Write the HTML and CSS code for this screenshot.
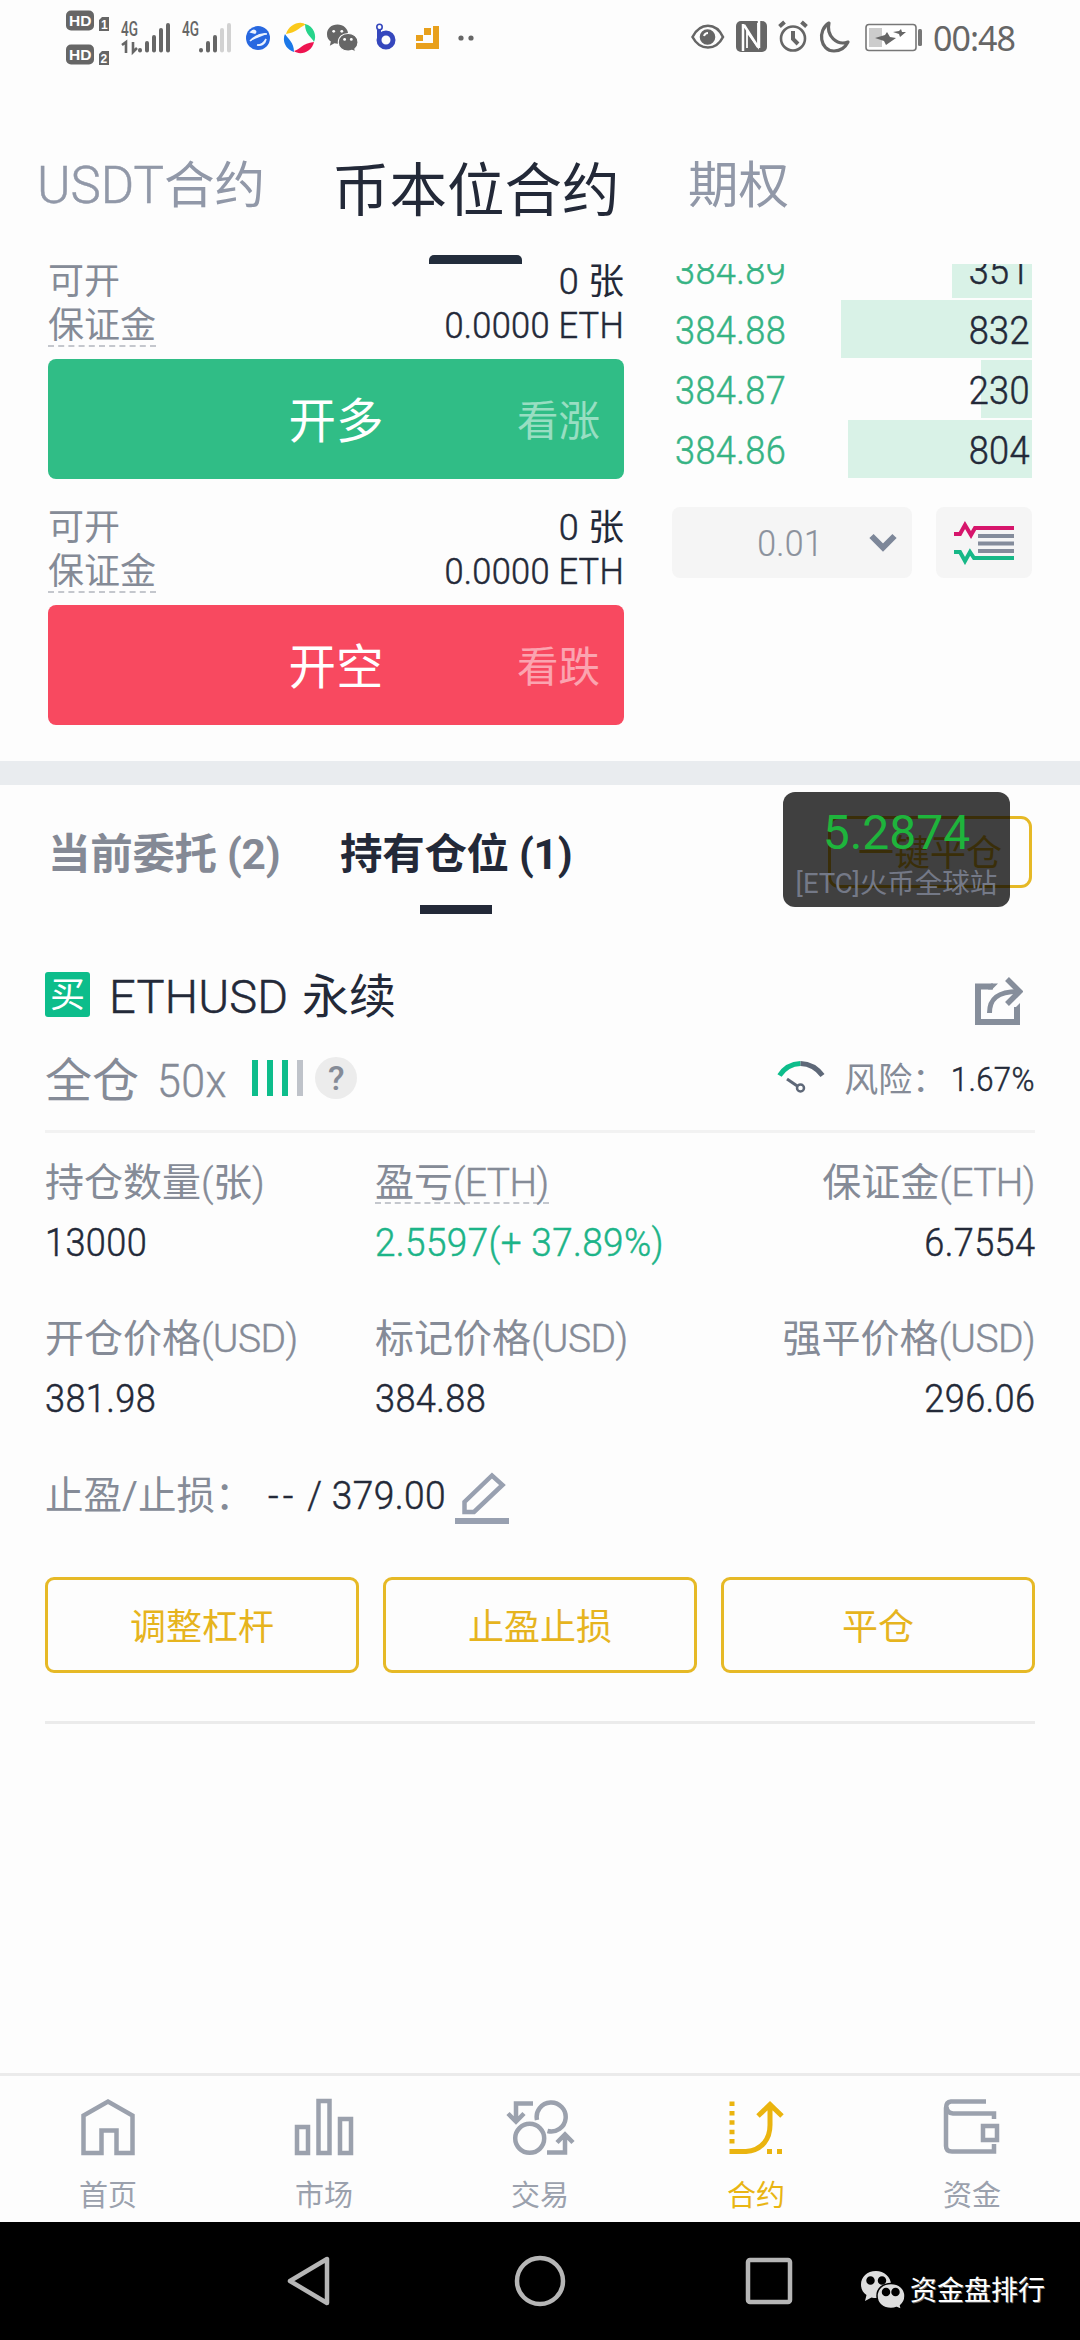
FILE: index.html
```html
<!DOCTYPE html>
<html lang="zh-CN">
<head>
<meta charset="utf-8">
<title>币本位合约</title>
<link rel="stylesheet" href="styles.css">
</head>
<body>
<header class="status">
  <svg class="st-net" width="186" height="60" viewBox="0 0 186 60">
    <g fill="#666"><rect y="4.500" width="28" height="20" rx="5"/><rect y="38.500" width="28" height="20" rx="5"/><path d="M33 14l3-3h7v14H33zM33 48l3-3h7v14H33z"/></g>
    <g class="st-hd"><text x="3" y="20">HD</text><text x="3" y="54">HD</text></g>
    <g class="st-sim"><text x="35" y="22.500">1</text><text x="34.500" y="56.500">2</text></g>
    <g class="st-4g"><text x="55" y="30" textLength="17" lengthAdjust="spacingAndGlyphs">4G</text><text x="116" y="30" textLength="17" lengthAdjust="spacingAndGlyphs">4G</text></g>
    <path d="M56 39l4-3v11M67 36v10l4-4" fill="none" stroke="#666" stroke-width="2.600"/>
    <g stroke="#666" stroke-width="4" stroke-linecap="round"><path d="M74 44v.5M81 37v7.500M88 31v13.500M95 24v20.500M102 19v25.500M135 44v.5M142 37v7.500M149 31v13.500"/><path stroke="#d2d2d2" d="M156 24v20.500M163 19v25.500"/></g>
  </svg>
  <svg class="st-globe" width="26" height="26" viewBox="0 0 26 26"><circle cx="13" cy="13" r="12" fill="#2868e0"/><path d="M6 7C9 4 12 6 10 8zM22 9C14 8 9 12 5 16M12 20c3 0 7-2 9-6-1 5-5 7-9 6" fill="#eaf2ff" stroke="#eaf2ff" stroke-width="1.600"/></svg>
  <svg class="st-ring" width="34" height="34" viewBox="0 0 34 34"><path fill="#fbc91b" d="M3 13C6 3 18-1 23 4c-5 0-7 7-20 9z"/><path fill="#27d48b" d="M22 3c9 2 12 12 9 18-2-5-9-7-9-18z"/><path fill="#ee1450" d="M31 21c-2 10-14 14-20 9 6-1 8-8 20-9z"/><path fill="#1b78e8" d="M11 31C2 28-1 19 2 13c3 5 9 8 9 18z"/></svg>
  <svg class="st-wechat" width="31" height="28" viewBox="0 0 44 38"><use href="#wechat" fill="#666" stroke="#fff"/><g fill="#fff"><circle cx="9.500" cy="9.500" r="2"/><circle cx="21" cy="9.500" r="2"/><circle cx="25" cy="21" r="2"/><circle cx="34.500" cy="21" r="2"/></g></svg>
  <svg class="st-b" width="22" height="28" viewBox="0 0 22 28"><circle cx="12" cy="17" r="7" fill="none" stroke="#3547bd" stroke-width="5"/><path d="M5 18V7" stroke="#3547bd" stroke-width="4"/><circle cx="5.500" cy="4" r="2.700" fill="none" stroke="#3547bd" stroke-width="1.600"/></svg>
  <svg class="st-sq" width="23" height="23" viewBox="0 0 23 23"><path fill="#e8a01c" d="M8 2h7v7H8zM0 9h7v6H0zM17 0h6v23H0v-6h17z"/></svg>
  <svg class="st-dots" width="16" height="6" viewBox="0 0 16 6"><circle cx="3" cy="3" r="2.600" fill="#666"/><circle cx="13" cy="3" r="2.600" fill="#666"/></svg>
  <svg class="st-sys" width="232" height="34" viewBox="0 0 232 34">
    <g fill="none" stroke="#666" stroke-width="2.600">
      <path d="M1.500 17C9 2 25 2 32 17 25 31 9 31 1.500 17z"/><circle cx="16.500" cy="17" r="6.500" fill="#666"/><path d="M13 16q1-3 4-3" stroke="#fff" stroke-width="2"/>
      <circle cx="102" cy="18.500" r="12"/><path stroke-width="4" d="M102 11v8l5 5M88.500 6.500l5-4.500M110.500 2l5 4.500"/>
      <path stroke-width="3.200" d="M138 3c-12 7-9 28 5 28 6 0 11-3 14-9-11 4-22-6-19-19z" stroke-linejoin="round"/>
    </g>
    <rect x="45" y="1" width="31" height="31" rx="5" fill="#666"/><path d="M52 31V4M53 5l14 22M68 1v27" stroke="#fff" stroke-width="2.500" fill="none"/><path d="M56 28V12l11 15V3" stroke="#fff" stroke-width="1.800" fill="none"/>
    <rect x="175" y="4.500" width="50" height="26" rx="3" fill="#fff" stroke="#777" stroke-width="1.600"/><rect x="178" y="8" width="13" height="19" fill="#ccc"/>
    <path d="M184 18l10-3 2-3 3 5 6 1-10 7-2-4zM202 12l6-1 2-2 1 3 4 0-6 5-1-3z" fill="#666"/><rect x="227" y="9" width="4" height="17" rx="1.500" fill="#777"/>
  </svg>
  <span class="st-time">00:48</span>
</header>

<nav class="tabs">
  <span class="tab t1"><span class="usdt">USDT</span>合约</span>
  <span class="tab active">币本位合约</span>
  <span class="tab t3">期权</span>
</nav>

<main>
<section class="trade">
  <div class="form">
    <div class="side">
      <div class="line l1"><span class="k">可开</span><span class="v"><span class="din w">0</span> 张</span></div>
      <div class="line l2"><span class="k dash">保证金</span><span class="v"><span class="din r eth">0.0000 ETH</span></span></div>
      <button class="btn long"><span></span><span>开多</span><small>看涨</small></button>
    </div>
    <div class="side">
      <div class="line l1"><span class="k">可开</span><span class="v"><span class="din w">0</span> 张</span></div>
      <div class="line l2"><span class="k dash">保证金</span><span class="v"><span class="din r eth">0.0000 ETH</span></span></div>
      <button class="btn short"><span></span><span>开空</span><small>看跌</small></button>
    </div>
  </div>
  <div class="book">
    <div class="lv"><span class="din p">384.89</span><span class="bar" style="width:80px"><span class="din r">351</span></span></div>
    <div class="lv"><span class="din p">384.88</span><span class="bar" style="width:191px"><span class="din r">832</span></span></div>
    <div class="lv"><span class="din p">384.87</span><span class="bar" style="width:51px"><span class="din r">230</span></span></div>
    <div class="lv"><span class="din p">384.86</span><span class="bar" style="width:184px"><span class="din r">804</span></span></div>
    <div class="ctl">
      <div class="select"><span class="din r">0.01</span><svg width="28" height="19" viewBox="0 0 28 19"><path d="M2.500 3L14 14.500 25.500 3" fill="none" stroke="#7d8799" stroke-width="6"/></svg></div>
      <div class="depth"><svg width="60" height="44" viewBox="0 0 60 44" fill="none" stroke-width="4"><path stroke="#d6156b" d="M0 13h6l5-9 6 10 4-7h39"/><path stroke="#848c9b" d="M24 15h36M24 22.500h36M24 30h36"/><path stroke="#17b887" d="M0 31h6l5 9 5-9 4 6h40"/></svg></div>
    </div>
  </div>
</section>

<section class="positions">
  <div class="ptabs">
    <span class="pt">当前委托 (2)</span>
    <span class="pt on">持有仓位 (1)</span>
    <span class="closeall">一键平仓</span>
    <aside class="float"><b>5.2874</b><i>[ETC]火币全球站</i></aside>
  </div>

  <div class="card">
    <div class="head">
      <span class="buy">买</span><span class="name"><span class="lt">ETHUSD</span> 永续</span>
      <svg class="share" width="48" height="48" viewBox="0 0 48 48" fill="none" stroke="#868e9b"><path stroke-width="6" d="M18 9.500H3V45h39V30"/><path fill="#868e9b" stroke="none" d="M16 6.500h7l-6 6h-4zM45 26v6h-6z"/><path stroke-width="5" d="M14.500 36C14.500 22 22 14.500 43 14.500"/><path stroke-width="5.500" d="M32 2l12.500 12.500L32 27"/></svg>
    </div>
    <div class="sub">
      <span class="mode">全仓</span><span class="din lev">50x</span>
      <span class="lvl"><i></i><i></i><i></i><i class="off"></i></span><span class="q">?</span>
      <svg class="gauge" width="48" height="34" viewBox="0 0 48 34" fill="none"><path stroke="#0dbd8b" stroke-width="5" d="M2.500 15.500Q10 4 23.500 3.500"/><path stroke="#5e6878" stroke-width="5" d="M23.500 3.500Q37 4 45.500 15.500"/><path stroke="#5e6878" stroke-width="3" d="M10 19l11 7.500"/><circle cx="23.500" cy="28" r="3.500" stroke="#5e6878" stroke-width="2.500"/></svg>
      <span class="risk">风险：</span><span class="pct"><span class="din r">1.67%</span></span>
    </div>
    <div class="grid">
      <div><label>持仓数量<s>(</s>张<s>)</s></label><p><span class="din">13000</span></p></div>
      <div><label class="dash">盈亏<s>(ETH)</s></label><p class="up"><span class="din">2.5597(+ 37.89%)</span></p></div>
      <div class="end"><label>保证金<s>(ETH)</s></label><p><span class="din r">6.7554</span></p></div>
      <div><label>开仓价格<s>(USD)</s></label><p><span class="din">381.98</span></p></div>
      <div><label>标记价格<s>(USD)</s></label><p><span class="din">384.88</span></p></div>
      <div class="end"><label>强平价格<s>(USD)</s></label><p><span class="din r">296.06</span></p></div>
    </div>
    <div class="tpsl">
      <span class="tl">止盈/止损：</span><span class="tv"><span class="din"><span class="none">--</span> / 379.00</span></span>
      <svg width="54" height="54" viewBox="0 0 54 54"><path d="M9.500 41V31L37 4.500 47.500 14 19 41z" fill="none" stroke="#98a0b0" stroke-width="4.500"/><path d="M0 50h54" stroke="#98a0b0" stroke-width="6"/></svg>
    </div>
    <div class="acts"><button>调整杠杆</button><button>止盈止损</button><button>平仓</button></div>
  </div>
</section>
</main>

<nav class="bottom">
  <a><svg viewBox="0 0 60 60"><path d="M5.500 56V18.500L30 4.500 54.500 18.500V56H38.500V33.500H23.500V56z"/></svg>首页</a>
  <a><svg viewBox="0 0 60 60"><path d="M3 30h11v26H3zM24.500 4h11v52h-11zM46 22h11v34H46z"/></svg>市场</a>
  <a><svg class="swap" viewBox="0 0 66 60"><path d="M26 6.500H9V24M1 16.500L9 24.500 17 16.500M30 23A14.500 14.500 0 1 1 40.500 34M40 55.500H58V38M50 45.500L58 37.500 66 45.500"/><circle cx="22.700" cy="41.300" r="14.500"/></svg>交易</a>
  <a class="cur"><svg viewBox="0 0 60 60"><path stroke-width="5" d="M6 4.500v43" stroke-dasharray="4.500 4.900"/><path stroke-width="5" d="M3.500 54.500H20C37 53 44 41 44 28V8M32 19L44 7.500 56 19M41 54.500h5M51 54.500h5"/></svg>合约</a>
  <a><svg viewBox="0 0 60 60"><path d="M44 4.500H9Q4 5 4 11V49Q4 54.500 10 54.500H52V47M4.500 10Q5 16 11 16.500H52V22M41 29h14v14H41z"/></svg>资金</a>
</nav>

<footer class="sysnav">
  <svg class="back" width="44" height="52" viewBox="0 0 44 52"><path d="M40 4v44L3 26z"/></svg>
  <svg class="home" width="52" height="52" viewBox="0 0 52 52"><circle cx="26" cy="26" r="23"/></svg>
  <svg class="recent" width="48" height="48" viewBox="0 0 48 48"><rect x="3" y="3" width="42" height="42" rx="2"/></svg>
  <svg class="wx" width="44" height="38" viewBox="0 0 44 38"><g id="wechat"><path stroke="none" d="M15 0C6 0 0 6 0 13.500c0 5 2 8 5.500 10.500L4 30l6.500-3.500C22 29 30 22 30 13.500 30 6 23 0 15 0z"/><path stroke-width="1.500" d="M30 12.500c-8 0-14 5-14 12.500s6 12.500 14 12.500c2 0 4-.3 5.500-1l5 2-1-4c3-2.500 4.500-5.500 4.500-9.500 0-7.500-6-12.500-14-12.500z"/></g><g fill="#000"><circle cx="9.500" cy="9.500" r="2"/><circle cx="21" cy="9.500" r="2"/><circle cx="25" cy="21" r="2"/><circle cx="34.500" cy="21" r="2"/></g></svg>
  <span>资金盘排行</span>
</footer>
</body>
</html>
```
FILE: styles.css
```css
* { box-sizing: border-box; }
body { margin: 0; width: 1080px; height: 2340px; display: flex; flex-direction: column; background: #fdfdfd; color: #232938; font-family: Roboto, "Noto Sans CJK SC", sans-serif; font-size: 36px; overflow: hidden; }
svg { display: block; flex: none; }
button { font: inherit; margin: 0; padding: 0; border: 0; }
s, i, b { text-decoration: none; font-style: normal; font-weight: 400; }

.din { display: inline-block; transform: scaleX(.915); transform-origin: left center; white-space: nowrap; font-weight: 300; letter-spacing: .4px; }
.din, .lt, .usdt, .grid s { -webkit-text-stroke: .5px currentColor; }
.din.r { transform-origin: right center; }
.din.w { transform: none; }
.din.eth { transform: scaleX(.955); letter-spacing: .3px; }

.status { height: 80px; flex: none; display: flex; align-items: flex-start; padding-left: 66px; color: #666; }
.st-net { margin-top: 6px; }
.st-hd text { font: bold 15.500px "Liberation Sans", sans-serif; fill: #fff; }
.st-sim text { font: bold 12px "Liberation Sans", sans-serif; fill: #fff; }
.st-4g text { font: 500 20px Roboto, sans-serif; fill: #666; }
.st-globe { margin: 25px 0 0 -7px; }
.st-ring { margin: 21px 0 0 12px; }
.st-wechat { margin: 24px 0 0 10px; }
.st-b { margin: 23px 0 0 16px; }
.st-sq { margin: 26px 0 0 20px; }
.st-dots { margin: 35px 0 0 19px; }
.st-sys { margin: 20px 0 0 217px; }
.st-time { margin: 15px 0 0 10px; font: 34px/46px "Noto Sans", sans-serif; letter-spacing: -1px; }

.tabs { height: 184px; flex: none; display: flex; padding-left: 37px; color: #9198a8; font-size: 50.500px; line-height: 184px; white-space: nowrap; }
.tab { margin-top: 14px; }
.usdt { font-weight: 300; letter-spacing: 0; font-size: 51px; }
.t1 { width: 295px; }
.t3 { margin-left: 2px; }
.active { position: relative; z-index: 1; color: #232938; font-size: 57.500px; width: 354px; margin-top: 20px; }
.active::after { content: ""; position: absolute; left: 97px; top: 155px; width: 93px; height: 9px; border-radius: 5px 5px 0 0; background: #232d3c; }

.trade { height: 521px; display: flex; justify-content: space-between; padding: 0 48px; overflow: hidden; border-bottom: 24px solid #e9ecef; }
.form { width: 576px; display: flex; flex-direction: column; gap: 31px; }
.line { display: flex; justify-content: space-between; white-space: nowrap; }
.l1 { height: 34px; line-height: 36px; }
.l2 { height: 44px; margin-top: 5px; line-height: 47px; }
.k { color: #858b97; }
.dash { border-bottom: 2px dashed #c4c7cd; }
.btn { width: 576px; height: 120px; margin-top: 12px; border-radius: 8px; color: #fff; font-size: 47.500px; line-height: 60px; display: grid; grid-template-columns: 1fr auto 1fr; align-items: center; padding: 5px 24px 0; }
.btn small { font-size: 41.500px; justify-self: end; opacity: .5; }
.long { background: #30bd86; }
.short { background: #f84960; }
.book { width: 360px; margin-top: -24px; }
.lv { height: 58px; margin-bottom: 2px; display: flex; justify-content: space-between; line-height: 62px; font-size: 39.500px; }
.p { color: #36b384; margin-left: 3px; }
.bar { background: #d9f2e7; display: flex; justify-content: flex-end; padding-right: 2px; }
.ctl { display: flex; justify-content: space-between; margin-top: 29px; }
.select { width: 240px; height: 71px; border-radius: 8px; background: #f5f5f5; display: flex; align-items: center; justify-content: flex-end; gap: 46px; padding-right: 15px; color: #8b919c; }
.select .din { transform: scaleX(.94); padding-top: 2px; -webkit-text-stroke: .2px; }
.depth { width: 96px; height: 71px; border-radius: 8px; background: #f5f5f5; display: grid; place-items: center; }

.ptabs { height: 129px; display: flex; padding-left: 48px; position: relative; font-size: 42.500px; font-weight: 700; line-height: 140px; color: #848995; white-space: nowrap; }
.pt { position: relative; width: 292px; letter-spacing: -.3px; }
.on { color: #232938; width: 488px; }
.on::after { content: ""; position: absolute; left: 80px; top: 120px; width: 72px; height: 9px; background: #232938; }
.closeall { width: 204px; height: 72px; margin-top: 31px; border: 3px solid #e6b926; border-radius: 11px; font-size: 36px; font-weight: 400; line-height: 70px; text-align: center; color: #e6b926; }
.float { position: absolute; left: 783px; top: 7px; width: 227px; height: 115px; border-radius: 12px; background: rgba(0,0,0,.75); display: flex; flex-direction: column; align-items: center; }
.float b { font-size: 48px; line-height: 48px; margin-top: 17px; color: #1eb43c; }
.float i { font-size: 27.500px; line-height: 32px; margin-top: 11px; color: #747987; }

.card { padding: 0 45px; }
.head { height: 120px; padding-top: 36px; display: flex; line-height: 94px; }
.buy { width: 45px; height: 45px; margin-top: 22px; border-radius: 3px; background: #0dbd8b; color: #fff; font-size: 35px; line-height: 47px; text-align: center; }
.name { margin-left: 19px; font-size: 47px; flex: 1; }
.lt { font-weight: 300; letter-spacing: .2px; margin-right: 2px; }
.share { margin: 27px 12px 0 0; }
.sub { height: 99px; border-bottom: 3px solid #f2f2f2; display: flex; line-height: 93px; color: #858b97; white-space: nowrap; }
.mode { font-size: 47px; width: 112px; }
.lev { font-size: 47px; width: 96px; -webkit-text-stroke: .4px; }
.lvl { display: flex; gap: 9px; height: 36px; margin-top: 26px; }
.lvl i { width: 6px; background: #0dbd8b; }
.lvl .off { background: #bfc3ca; }
.q { width: 42px; height: 42px; border-radius: 50%; margin: 23px 0 0 12px; background: #ececec; font-size: 34px; font-weight: 500; line-height: 43px; text-align: center; }
.gauge { margin: 26px 0 0 420px; }
.risk { font-size: 34px; margin-left: 19px; width: 99px; }
.pct { flex: 1; text-align: right; font-size: 34px; color: #232938; line-height: 90px; }

.grid { display: grid; grid-template-columns: 330px 330px 330px; grid-auto-rows: 156px; padding-top: 25px; }
.grid label { display: inline-block; height: 46px; line-height: 51px; font-size: 39px; color: #858b97; white-space: nowrap; vertical-align: top; }
.grid s { font-weight: 300; letter-spacing: -.6px; -webkit-text-stroke-width: .4px; }
.grid p { margin: 13px 0 0; font-size: 39.500px; line-height: 52px; }
.grid .up { color: #1cb488; }
.up .din { transform: scaleX(.935); }
.end { text-align: right; }
.tpsl { height: 107px; display: flex; font-size: 38.500px; line-height: 51px; white-space: nowrap; }
.tl { color: #858b97; width: 223px; }
.tv { width: 187px; }
.tv .din { font-size: 39.500px; transform: scaleX(.94); }
.none { letter-spacing: 4.500px; }
.tpsl svg { margin-top: 1px; }
.acts { display: flex; gap: 24px; height: 147px; border-bottom: 3px solid #ebebeb; }
.acts button { width: 314px; height: 96px; border: 3px solid #e6b926; border-radius: 9px; background: none; color: #e6b41e; font-size: 36px; padding-bottom: 3px; }
main { flex: 1; }

.bottom { height: 149px; flex: none; border-top: 3px solid #ebebeb; display: grid; grid-template-columns: repeat(5, 216px); font-size: 29px; line-height: 43px; color: #9ba1ad; }
.bottom a { display: flex; flex-direction: column; align-items: center; padding-top: 21px; gap: 18px; }
.bottom svg { width: 60px; height: 60px; fill: none; stroke: #9ba1ad; stroke-width: 4.500; }
.bottom .swap { width: 66px; overflow: visible; }
.bottom .cur { color: #e9b513; }
.bottom .cur svg { stroke: #eab40f; }
.sysnav { height: 118px; flex: none; background: #000; display: flex; padding-left: 287px; color: #fff; font-size: 27px; line-height: 43px; }
.sysnav svg { fill: none; stroke: #b6b6b6; stroke-width: 4.500; stroke-linejoin: round; }
.back { margin-top: 33px; }
.home { margin: 33px 0 0 183px; }
.recent { margin: 35px 0 0 179px; }
.sysnav .wx { margin: 49px 0 0 68px; fill: #ddd; stroke: #000; }
.sysnav span { margin: 48px 0 0 5px; text-shadow: 1px 1px 0 #666; }
```
